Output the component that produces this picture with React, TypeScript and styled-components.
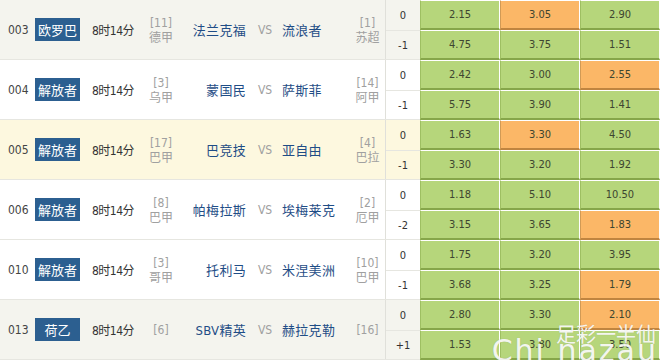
import React, { ReactElement } from "react";
import styled, { createGlobalStyle } from "styled-components";

interface OddsLine {
  handicap: string;
  odds: [string, string, string];
  hot?: number;
}

interface Match {
  no: string;
  league: string;
  time: string;
  homeRank: string;
  homeLeague?: string;
  home: string;
  away: string;
  awayRank: string;
  awayLeague?: string;
  tone: "grey" | "white" | "yellow";
  lines: [OddsLine, OddsLine];
}

const matches: Match[] = [
  {
    no: "003",
    league: "欧罗巴",
    time: "8时14分",
    homeRank: "[11]",
    homeLeague: "德甲",
    home: "法兰克福",
    away: "流浪者",
    awayRank: "[1]",
    awayLeague: "苏超",
    tone: "grey",
    lines: [
      { handicap: "0", odds: ["2.15", "3.05", "2.90"], hot: 1 },
      { handicap: "-1", odds: ["4.75", "3.75", "1.51"] },
    ],
  },
  {
    no: "004",
    league: "解放者",
    time: "8时14分",
    homeRank: "[3]",
    homeLeague: "乌甲",
    home: "蒙国民",
    away: "萨斯菲",
    awayRank: "[14]",
    awayLeague: "阿甲",
    tone: "white",
    lines: [
      { handicap: "0", odds: ["2.42", "3.00", "2.55"], hot: 2 },
      { handicap: "-1", odds: ["5.75", "3.90", "1.41"] },
    ],
  },
  {
    no: "005",
    league: "解放者",
    time: "8时14分",
    homeRank: "[17]",
    homeLeague: "巴甲",
    home: "巴竞技",
    away: "亚自由",
    awayRank: "[4]",
    awayLeague: "巴拉",
    tone: "yellow",
    lines: [
      { handicap: "0", odds: ["1.63", "3.30", "4.50"], hot: 1 },
      { handicap: "-1", odds: ["3.30", "3.20", "1.92"] },
    ],
  },
  {
    no: "006",
    league: "解放者",
    time: "8时14分",
    homeRank: "[8]",
    homeLeague: "巴甲",
    home: "帕梅拉斯",
    away: "埃梅莱克",
    awayRank: "[2]",
    awayLeague: "厄甲",
    tone: "white",
    lines: [
      { handicap: "0", odds: ["1.18", "5.10", "10.50"] },
      { handicap: "-2", odds: ["3.15", "3.65", "1.83"], hot: 2 },
    ],
  },
  {
    no: "010",
    league: "解放者",
    time: "8时14分",
    homeRank: "[3]",
    homeLeague: "哥甲",
    home: "托利马",
    away: "米涅美洲",
    awayRank: "[10]",
    awayLeague: "巴甲",
    tone: "white",
    lines: [
      { handicap: "0", odds: ["1.75", "3.20", "3.95"] },
      { handicap: "-1", odds: ["3.68", "3.25", "1.79"], hot: 2 },
    ],
  },
  {
    no: "013",
    league: "荷乙",
    time: "8时14分",
    homeRank: "[6]",
    home: "SBV精英",
    away: "赫拉克勒",
    awayRank: "[16]",
    tone: "grey",
    lines: [
      { handicap: "0", odds: ["2.80", "3.30", "2.10"], hot: 2 },
      { handicap: "+1", odds: ["1.53", "3.80", "3.50"] },
    ],
  },
];

const rowColors = {
  grey: "#f4f4ee",
  white: "#ffffff",
  yellow: "#fdf8df",
};

export default function App(): ReactElement {
  return (
    <>
      <GlobalStyle />
      <Board>
        {matches.map((m) => (
          <MatchRow key={m.no} tone={m.tone}>
            <Info>
              <Num>{m.no}</Num>
              <League>{m.league}</League>
              <Time>{m.time}</Time>
              <Rank>
                <span>{m.homeRank}</span>
                {m.homeLeague && <span>{m.homeLeague}</span>}
              </Rank>
              <Team align="right">{m.home}</Team>
              <Vs>VS</Vs>
              <Team align="left">{m.away}</Team>
              <Rank>
                <span>{m.awayRank}</span>
                {m.awayLeague && <span>{m.awayLeague}</span>}
              </Rank>
            </Info>
            <Lines>
              {m.lines.map((line, i) => (
                <Line key={i}>
                  <Handicap last={i === 1}>{line.handicap}</Handicap>
                  {line.odds.map((o, j) => (
                    <Odd key={j} hot={line.hot === j}>
                      {o}
                    </Odd>
                  ))}
                </Line>
              ))}
            </Lines>
          </MatchRow>
        ))}
        <Watermark>
          <small>足彩一半仙</small>
          <span>Chi nazau</span>
        </Watermark>
      </Board>
    </>
  );
}

const GlobalStyle = createGlobalStyle`
  html, body {
    margin: 0;
    padding: 0;
    background: #ffffff;
  }
  body {
    font-family: "DejaVu Sans", "Noto Sans CJK SC", sans-serif;
    color: #333;
  }
`;

const Board = styled.div`
  position: relative;
  width: 660px;
  height: 360px;
  overflow: hidden;
`;

const MatchRow = styled.div<{ tone: "grey" | "white" | "yellow" }>`
  display: flex;
  height: 60px;
  box-sizing: border-box;
  border-bottom: 1px solid #e6e6e0;
  background: ${(props) => rowColors[props.tone]};
`;

const Info = styled.div`
  display: grid;
  grid-template-columns: 27px 45px 12px 50px 38px 68px 34px 68px 35px;
  align-items: center;
  width: 385px;
  padding-left: 8px;
  box-sizing: border-box;

  & > :nth-child(3) {
    grid-column: 4;
  }
`;

const Num = styled.span`
  font-size: 12px;
  color: #444;
  font-family: "DejaVu Sans Condensed", "DejaVu Sans", sans-serif;
`;

const League = styled.span`
  height: 23px;
  line-height: 23px;
  background: #2c5f90;
  color: #ffffff;
  text-align: center;
  font-size: 13px;
  font-family: "Noto Sans CJK SC", sans-serif;
`;

const Time = styled.span`
  font-size: 12px;
  color: #333;
  letter-spacing: -0.5px;
  font-family: "DejaVu Sans Condensed", "Noto Sans CJK SC", sans-serif;
`;

const Rank = styled.span`
  display: flex;
  flex-direction: column;
  align-items: center;
  padding-top: 2px;
  font-size: 12px;
  line-height: 15px;
  color: #a0a0a0;
  font-family: "DejaVu Sans Condensed", "Noto Sans CJK SC", sans-serif;
`;

const Team = styled.span<{ align: "left" | "right" }>`
  text-align: ${(props) => props.align};
  font-size: 13px;
  color: #1f4d86;
  white-space: nowrap;
  letter-spacing: 0.3px;
  font-family: "DejaVu Sans Condensed", "Noto Sans CJK SC", sans-serif;
  padding-right: ${(props) => (props.align === "right" ? "2px" : "0")};
`;

const Vs = styled.span`
  text-align: center;
  font-size: 12px;
  color: #a0a0a0;
  font-family: "DejaVu Sans Condensed", sans-serif;
`;

const Lines = styled.div`
  display: flex;
  flex-direction: column;
  width: 275px;
  border-left: 1px solid #e0e0da;
  box-sizing: border-box;
`;

const Line = styled.div`
  display: grid;
  grid-template-columns: 34px 80px 80px 80px;
  height: 30px;
`;

const Handicap = styled.div<{ last: boolean }>`
  display: flex;
  align-items: center;
  justify-content: center;
  font-size: 11px;
  color: #333;
  font-family: "DejaVu Sans Condensed", sans-serif;
  border-top: ${(props) => (props.last ? "1px solid #e6e6e0" : "none")};
  box-sizing: border-box;
`;

const Odd = styled.div<{ hot: boolean }>`
  display: flex;
  align-items: center;
  justify-content: center;
  box-sizing: border-box;
  height: 30px;
  font-size: 11px;
  font-family: "DejaVu Sans Condensed", sans-serif;
  color: #3d4530;
  background: ${(props) => (props.hot ? "#fbb767" : "#b6d67b")};
  border-left: 1px solid ${(props) => (props.hot ? "#d19a55" : "#9ebf62")};
  border-right: 1px solid #ffffff;
  border-top: 1px solid #ffffff;
  border-bottom: 2px solid ${(props) => (props.hot ? "#c08540" : "#86a64a")};
`;

const Watermark = styled.div`
  position: absolute;
  right: 2px;
  bottom: -6px;
  display: flex;
  flex-direction: column;
  align-items: flex-end;
  color: rgba(255, 255, 255, 0.9);
  text-shadow: 0 0 1px rgba(120, 120, 120, 0.35);
  pointer-events: none;

  small {
    font-size: 20px;
    line-height: 20px;
    font-family: "Noto Sans CJK SC", sans-serif;
    margin-right: 2px;
  }

  span {
    font-size: 30px;
    line-height: 30px;
    letter-spacing: 2px;
    font-family: "DejaVu Sans", sans-serif;
    margin-top: -8px;
  }
`;
